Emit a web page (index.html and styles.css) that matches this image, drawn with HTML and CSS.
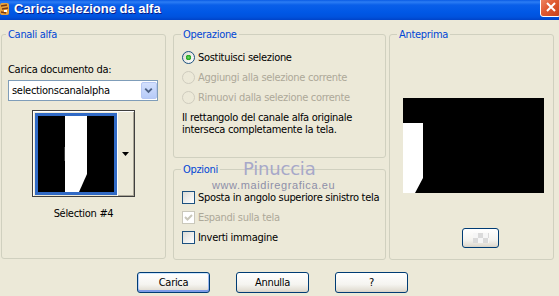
FILE: index.html
```html
<!DOCTYPE html>
<html lang="it">
<head>
<meta charset="UTF-8">
<meta name="viewport" content="width=device-width, initial-scale=1.0">
<title>Carica selezione da alfa</title>
<link rel="stylesheet" href="styles.css">
</head>
<body>
  <div class="titlebar">
    <svg class="app-icon" width="10" height="14" viewBox="0 0 10 14">
      <rect x="0" y="1" width="9" height="12" rx="2" fill="#E9A23B"/>
      <path d="M1 4 L7 3 M2 7 L8 6 M1 10 L6 11" stroke="#7B3A12" stroke-width="1.5"/>
      <rect x="4" y="8" width="3" height="2" fill="#fff"/>
    </svg>
    <span class="title">Carica selezione da alfa</span>
    <span class="close">
      <svg width="10" height="10" viewBox="0 0 10 10"><path d="M1 1 L9 9 M9 1 L1 9" stroke="#fff" stroke-width="2"/></svg>
    </span>
  </div>

  <div class="content">
    <fieldset class="group group-canali">
      <legend>Canali alfa</legend>
      <label class="field-label">Carica documento da:</label>
      <div class="combo">
        <span>selectionscanalalpha</span>
        <span class="combo-btn">
          <svg width="16" height="17" viewBox="0 0 16 17"><path d="M4.5 6.5 L8 10 L11.5 6.5" fill="none" stroke="#4D6185" stroke-width="2"/></svg>
        </span>
      </div>
      <div class="thumb-picker">
        <div class="thumb">
          <svg width="82" height="82" viewBox="0 0 82 82">
            <defs>
              <linearGradient id="edge" x1="0" x2="1" y1="0" y2="0">
                <stop offset="0" stop-color="#000"/>
                <stop offset="1" stop-color="#777"/>
              </linearGradient>
            </defs>
            <rect width="82" height="82" fill="#316AC5"/>
            <rect x="3" y="3" width="76" height="76" fill="#000"/>
            <polygon points="30,3 52,3 52,61 44,79 30,79" fill="#fff"/>
            <rect x="29" y="34" width="1" height="14" fill="url(#edge)"/>
          </svg>
        </div>
        <div class="thumb-drop">
          <svg width="7" height="4" viewBox="0 0 7 4"><polygon points="0,0 7,0 3.5,4" fill="#000"/></svg>
        </div>
      </div>
      <div class="thumb-caption">Sélection #4</div>
    </fieldset>

    <div class="middle">
      <fieldset class="group group-op">
        <legend>Operazione</legend>
        <div class="option-row first"><span class="radio checked"></span>Sostituisci selezione</div>
        <div class="option-row disabled"><span class="radio"></span>Aggiungi alla selezione corrente</div>
        <div class="option-row disabled"><span class="radio"></span>Rimuovi dalla selezione corrente</div>
        <p class="desc">Il rettangolo del canale alfa originale<br>interseca completamente la tela.</p>
      </fieldset>

      <fieldset class="group group-opt">
        <legend>Opzioni</legend>
        <div class="option-row first"><span class="check"></span>Sposta in angolo superiore sinistro tela</div>
        <div class="option-row disabled"><span class="check"><svg width="11" height="11" viewBox="0 0 11 11"><path d="M2 5 L4.5 7.5 L9 3" fill="none" stroke="#C9C7BA" stroke-width="2"/></svg></span>Espandi sulla tela</div>
        <div class="option-row"><span class="check"></span>Inverti immagine</div>
      </fieldset>

      <div class="watermark">Pinuccia</div>
      <div class="watermark-url">www.maidiregrafica.eu</div>
    </div>

    <fieldset class="group group-preview">
      <legend>Anteprima</legend>
      <div class="preview">
        <svg width="141" height="95" viewBox="0 0 141 95">
          <rect width="141" height="95" fill="#000"/>
          <polygon points="0,25 20,25 20,80 12,95 0,95" fill="#fff"/>
        </svg>
      </div>
      <button class="btn swatch-btn" type="button"><span class="checker"></span></button>
    </fieldset>
  </div>

  <div class="actions">
    <button class="btn default" type="button">Carica</button>
    <button class="btn" type="button">Annulla</button>
    <button class="btn" type="button">?</button>
  </div>
</body>
</html>
```

FILE: styles.css
```css
* {
  box-sizing: border-box;
}

body {
  margin: 0;
  width: 559px;
  height: 296px;
  overflow: hidden;
  background-color: #ECE9D8;
  font-family: "DejaVu Sans Condensed", "Liberation Sans", Arial, sans-serif;
  font-size: 11px;
  letter-spacing: -0.3px;
  color: #000;
}

/* title bar */
.titlebar {
  display: flex;
  align-items: flex-start;
  height: 20px;
  overflow: hidden;
  background: linear-gradient(#0A5BE4 0%, #2C7DF4 10%, #0A5FE9 25%, #0058E6 60%, #0052DD 85%, #0043C8 100%);
}

.app-icon {
  flex: none;
  margin-top: 2px;
}

.title {
  flex: 1;
  margin: 1px 0 0 4px;
  font: bold 13px/15px "Liberation Sans", Arial, sans-serif;
  letter-spacing: 0;
  color: #fff;
  text-shadow: 1px 1px 0 #0A1C88;
}

.close {
  flex: none;
  display: flex;
  align-items: center;
  justify-content: center;
  width: 21px;
  height: 20px;
  margin: -3px -2px 0 0;
  border: 1px solid #fff;
  border-radius: 3px;
  background: linear-gradient(135deg, #EE8A68, #E05A31 45%, #C8401A);
}

/* main area */
.content {
  display: flex;
  padding: 8px 0 0 1px;
}

.group {
  margin: 0;
  min-width: 0;
  padding: 0 8px;
  border: 1px solid #D0D0BF;
  border-radius: 3px;
}

.group legend {
  margin-left: -1px;
  padding: 0 2px;
  line-height: 13px;
  color: #0046D5;
}

.group-canali {
  width: 165px;
  height: 231px;
  padding: 0 6px;
}

.group-canali legend {
  margin-left: -2px;
}

.field-label {
  display: block;
  margin-top: 22px;
  line-height: 13px;
}

.combo {
  display: flex;
  align-items: center;
  width: 150px;
  height: 21px;
  margin-top: 4px;
  padding-left: 3px;
  border: 1px solid #7F9DB9;
  background: #fff;
}

.combo-btn {
  display: flex;
  margin-left: auto;
  width: 16px;
  height: 17px;
  border: 1px solid #B6C7F3;
  border-radius: 2px;
  background: linear-gradient(#D3E0FD, #B7CBF8);
}

.combo-btn svg {
  margin: -1px 0 0 -1px;
}

.thumb-picker {
  display: flex;
  width: 103px;
  height: 87px;
  margin: 9px 0 0 24px;
  border: 1px solid #3F3F3F;
}

.thumb {
  width: 84px;
  padding: 2px 0 1px 2px;
  box-shadow: inset 1px 1px 0 #fff;
}

.thumb svg {
  display: block;
}

.thumb-drop {
  flex: 1;
  display: flex;
  align-items: center;
  justify-content: center;
  box-shadow: inset 1px 1px 0 #fff, inset -1px -1px 0 #ACA899;
}

.thumb-caption {
  margin-top: 10px;
  line-height: 13px;
  text-align: center;
}

/* middle column */
.middle {
  position: relative;
  display: flex;
  flex-direction: column;
  width: 213px;
  margin-left: 7px;
}

.group-op {
  height: 130px;
}

.group-opt {
  height: 97px;
  margin-top: 5px;
}

.option-row {
  display: flex;
  align-items: center;
  gap: 3px;
  height: 20px;
  white-space: nowrap;
}

.group-op .option-row.first {
  margin-top: 6px;
}

.group-opt .option-row.first {
  margin-top: 11px;
}

.option-row.disabled {
  color: #ACA899;
}

.radio {
  flex: none;
  width: 13px;
  height: 13px;
  border: 1px solid #1C5180;
  border-radius: 50%;
  background: linear-gradient(135deg, #DCD9CF, #fff);
}

.radio.checked {
  background: radial-gradient(circle at 50% 50%, #6BDC5E 0, #21A121 2.5px, transparent 3px), linear-gradient(135deg, #DCD9CF, #fff);
}

.disabled .radio {
  border-color: #CFCCBE;
  background: transparent;
}

.check {
  flex: none;
  display: flex;
  width: 13px;
  height: 13px;
  border: 1px solid #1C5180;
  background: linear-gradient(135deg, #DCDCD7, #fff);
}

.disabled .check {
  border-color: #CAC8BB;
  background: #fff;
}

.desc {
  margin: 5px 0 0;
  line-height: 12px;
  white-space: nowrap;
}

.watermark {
  position: absolute;
  left: 70px;
  top: 131px;
  font: 18px/20px "DejaVu Sans", sans-serif;
  letter-spacing: -0.2px;
  color: #A7A8C9;
}

.watermark-url {
  position: absolute;
  left: 39px;
  top: 151px;
  font: 11px/12px "Liberation Sans", Arial, sans-serif;
  letter-spacing: 0.6px;
  color: #8E8FA8;
}

/* preview column */
.group-preview {
  width: 165px;
  height: 232px;
  margin-left: 3px;
}

.preview {
  width: 141px;
  height: 95px;
  margin: 57px 0 0 5px;
}

.preview svg {
  display: block;
}

/* buttons */
.btn {
  display: flex;
  align-items: center;
  justify-content: center;
  width: 73px;
  height: 21px;
  padding: 0;
  border: 1px solid #003C74;
  border-radius: 3px;
  background: linear-gradient(#FFFFFF, #F5F4F0 60%, #E3DFD5 90%, #D6D0C5);
  font: inherit;
  letter-spacing: inherit;
  color: #000;
}

.btn.default {
  box-shadow: inset 0 1px 0 #CEE7FF, inset 0 -2px 0 #7D9BE8, inset 1px 0 0 #B6CFF8, inset -1px 0 0 #9BB7EE;
}

.swatch-btn {
  width: 37px;
  height: 20px;
  margin: 35px 0 0 64px;
}

.checker {
  width: 16px;
  height: 10px;
  background-color: #F6F6F6;
  background-image: conic-gradient(#DADADA 25%, transparent 0 50%, #DADADA 0 75%, transparent 0);
  background-size: 10px 10px;
}

.actions {
  display: flex;
  gap: 26px;
  padding: 12px 0 0 137px;
}
```
